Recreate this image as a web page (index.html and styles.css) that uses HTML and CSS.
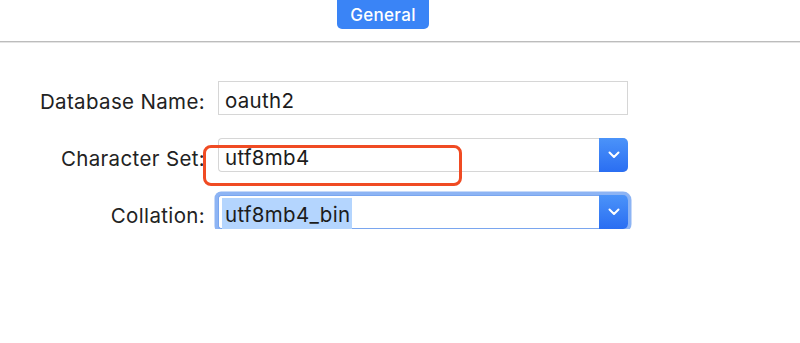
FILE: index.html
```html
<!DOCTYPE html>
<html>
<head>
<meta charset="utf-8">
<link rel="stylesheet" href="styles.css">
</head>
<body>
<div class="tabs">
  <div class="tab-active">General</div>
</div>
<form class="form">
  <label class="label">Database Name:</label>
  <div class="field text-field"><span class="value">oauth2</span></div>

  <label class="label">Character Set:</label>
  <div class="field select annotated">
    <span class="value">utf8mb4</span>
    <span class="arrow"><svg width="12" height="8" viewBox="0 0 12 8"><path d="M1.5 1.5 L6 6 L10.5 1.5" fill="none" stroke="#fff" stroke-width="2" stroke-linecap="round" stroke-linejoin="round"/></svg></span>
    <span class="mark"></span>
  </div>

  <label class="label">Collation:</label>
  <div class="field select focused">
    <span class="value"><span class="sel">utf8mb4_bin</span></span>
    <span class="arrow"><svg width="12" height="8" viewBox="0 0 12 8"><path d="M1.5 1.5 L6 6 L10.5 1.5" fill="none" stroke="#fff" stroke-width="2" stroke-linecap="round" stroke-linejoin="round"/></svg></span>
  </div>
</form>
</body>
</html>
```
FILE: styles.css
```css
html, body {
  margin: 0;
  padding: 0;
  background: #ffffff;
  font-family: Inter, "Noto Sans", "Liberation Sans", sans-serif;
  color: #222222;
}

.tabs {
  height: 41px;
  border-bottom: 1px solid #bcbcbc;
  box-shadow: 0 1px 0 #e4e4e4;
  display: flex;
  padding-left: 337px;
}

.tab-active {
  margin-top: -4px;
  height: 33px;
  width: 92px;
  box-sizing: border-box;
  background: #3a84f6;
  color: #fff;
  border-radius: 5px;
  font-size: 17px;
  font-weight: 500;
  letter-spacing: 0.3px;
  display: flex;
  align-items: center;
  justify-content: center;
  padding-top: 4px;
}

.form {
  margin-top: 39px;
  display: grid;
  grid-template-columns: 205px 410px;
  grid-auto-rows: 34px;
  column-gap: 13px;
  row-gap: 23px;
}

.label {
  justify-self: end;
  align-self: center;
  font-size: 20.5px;
  letter-spacing: 0.35px;
  padding-top: 6px;
}

.field {
  position: relative;
  box-sizing: border-box;
  height: 34px;
  border: 1px solid #d6d6d6;
  background: #fff;
  display: flex;
  align-items: center;
  font-size: 20.5px;
  letter-spacing: 0.3px;
  color: #1c1c1c;
}

.value {
  padding-left: 6px;
  padding-top: 5px;
  flex: 1;
}

.select {
  border-right: none;
  border-radius: 4px 5px 5px 4px;
  width: 410px;
}

.arrow {
  width: 29px;
  height: 34px;
  margin-top: -1px;
  margin-bottom: -1px;
  border-radius: 0 5px 5px 0;
  background: linear-gradient(#4b93f9, #2a6ef2);
  display: flex;
  align-items: center;
  justify-content: center;
}

.focused {
  box-shadow: 0 0 0 3.5px #8db4f4;
  border-color: #7aa6ef;
  border-radius: 3px 5px 5px 3px;
}

.sel {
  background: #b4d5fe;
  padding: 4px 2px 3px 3px;
  margin-left: -3px;
}

.mark {
  position: absolute;
  left: -16px;
  top: 6px;
  width: 259px;
  height: 41px;
  box-sizing: border-box;
  border: 3px solid #f04b23;
  border-radius: 8px;
  pointer-events: none;
}
```
